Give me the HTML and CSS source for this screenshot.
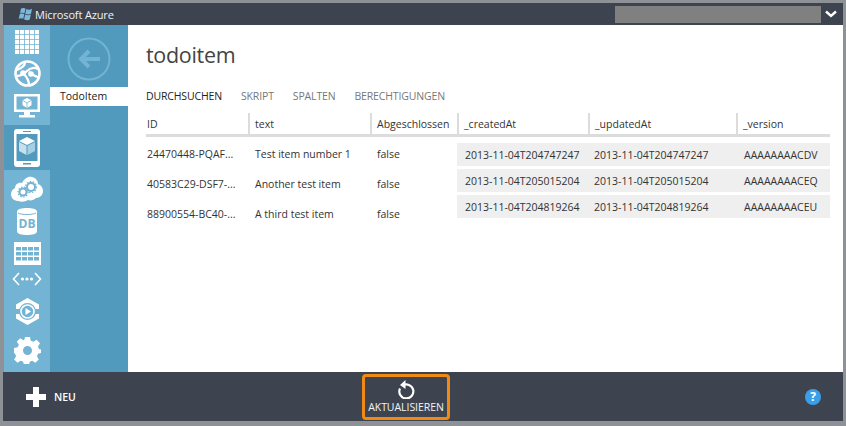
FILE: index.html
```html
<!DOCTYPE html>
<html lang="de">
<head>
<meta charset="utf-8">
<title>Microsoft Azure</title>
<link rel="stylesheet" href="styles.css">
</head>
<body>
<div class="window">
  <header class="titlebar">
    <svg class="logo" width="16" height="15" viewBox="0 0 16 15"><path fill="#7ab8dc" d="M4 1.500C6 .5 7.500 1 8.500 1.600L7.500 6.300C6 5.600 4.500 5.400 3 6.200ZM9.300 2C11 3 13 3 15 1.800L14 6.800C12 7.800 10 7.600 8.300 6.800ZM2.800 7C4.500 6.200 6 6.400 7.300 7.100L6.300 11.800C5 11 3.200 11 1.700 11.800ZM8.100 7.600C10 8.400 12 8.600 13.800 7.600L12.800 12.500C11 13.500 9 13.200 7.100 12.400Z"/></svg>
    <span class="brand">Microsoft Azure</span>
    <div class="account"></div>
    <svg class="chevron" width="12" height="8" viewBox="0 0 12 8"><path d="M1 1.500l5 4.500 5-4.500" fill="none" stroke="#fff" stroke-width="2.400"/></svg>
  </header>

  <div class="main">
    <nav class="rail">
      <div class="rail-item h34"><svg width="24" height="24" viewBox="0 0 24 24" fill="#fff"><path d="M0 0h4.200v4.200H0zM5 0h4.200v4.200H5zM10 0h4.200v4.200H10zM15 0h4.200v4.200H15zM20 0h4v4.200h-4zM0 5h4.200v4.200H0zM5 5h4.200v4.200H5zM10 5h4.200v4.200H10zM15 5h4.200v4.200H15zM20 5h4v4.200h-4zM0 10h4.200v4.200H0zM5 10h4.200v4.200H5zM10 10h4.200v4.200H10zM15 10h4.200v4.200H15zM20 10h4v4.200h-4zM0 15h4.200v4.200H0zM5 15h4.200v4.200H5zM10 15h4.200v4.200H10zM15 15h4.200v4.200H15zM20 15h4v4.200h-4zM0 20h4.200v4H0zM5 20h4.200v4H5zM10 20h4.200v4H10zM15 20h4.200v4H15zM20 20h4v4h-4z"/></svg></div>
      <div class="rail-item h28"><svg width="27" height="27" viewBox="0 0 27 27"><circle cx="13.500" cy="13.500" r="12" fill="none" stroke="#fff" stroke-width="2.600"/><path d="M3 10C8 8 11 5 11 2M24 9c-4-2-8-1-11 2-3 3-6 5-10 5M9 13c3 3 6 7 6 12M15 12c3 2 6 5 10 5" fill="none" stroke="#fff" stroke-width="2.400"/><circle cx="9" cy="13" r="2.800" fill="#fff"/><circle cx="17" cy="14" r="2.800" fill="#fff"/></svg></div>
      <div class="rail-item h38"><svg width="26" height="24" viewBox="0 0 26 24"><path fill="#fff" fill-rule="evenodd" d="M0 0h26v18H0zM2.500 2.500v13h21v-13z"/><path fill="#fff" d="M10 18h6v3h-6zM5 21h16v2.500H5zM13 4l4.500 2.300v5L13 14l-4.500-2.700v-5z"/><path stroke="#73b3d3" stroke-width=".8" fill="none" d="M8.500 6.300L13 9l4.500-2.700M13 9v5"/></svg></div>
      <div class="rail-item h45 selected"><svg width="26" height="38" viewBox="0 0 26 38"><path fill="#fff" fill-rule="evenodd" d="M3 0h20a3 3 0 0 1 3 3v32a3 3 0 0 1-3 3H3a3 3 0 0 1-3-3V3a3 3 0 0 1 3-3zM2.500 5v27h21V5z"/><path fill="#519abd" d="M9 2h8v1H9zM9 34h8v1.500H9z"/><path fill="#fff" d="M13 8l8 4-8 4-8-4z"/><path fill="#c6e0ee" d="M5 13l7.500 3.700V26L5 22z"/><path fill="#a5cfe4" d="M21 13l-7.500 3.700V26l7.500-4z"/></svg></div>
      <div class="rail-item h38"><svg width="32" height="26" viewBox="0 0 32 26"><path fill="#fff" d="M7 25C2 25 0 21 0 18c0-3 2-5 4-6 0-3 3-6 7-5 2-4 6-7 10-6 4 1 6 4 6 7 3 1 5 4 5 7 0 4-3 7-7 7-2 2-5 3-8 2-3 2-7 2-10 1z"/><circle cx="12" cy="16" r="3.500" fill="none" stroke="#73b3d3" stroke-width="2"/><circle cx="20" cy="11" r="4" fill="none" stroke="#73b3d3" stroke-width="2"/><circle cx="12" cy="16" r="5" fill="none" stroke="#73b3d3" stroke-width="1.200" stroke-dasharray="1.500 1.500"/><circle cx="20" cy="11" r="5.500" fill="none" stroke="#73b3d3" stroke-width="1.200" stroke-dasharray="1.500 1.500"/></svg></div>
      <div class="rail-item h26"><svg width="20" height="27" viewBox="0 0 20 27"><path fill="#fff" d="M0 3.500C0 1 5 0 10 0s10 1 10 3.500v20C20 26 15 27 10 27S0 26 0 23.500z"/><path d="M1 5c3 2 15 2 18 0" fill="none" stroke="#73b3d3" stroke-width="1"/><text x="10" y="20" text-anchor="middle" class="db-text">DB</text></svg></div>
      <div class="rail-item h38"><svg width="27" height="23" viewBox="0 0 27 23"><path fill="#fff" d="M0 0h27v23H0z"/><path fill="#73b3d3" d="M2 5h5v3.500H2zM8 5h5v3.500H8zM14 5h5v3.500h-5zM20 5h5v3.500h-5zM2 10h5v3.500H2zM8 10h5v3.500H8zM14 10h5v3.500h-5zM20 10h5v3.500h-5zM2 15h5v3.500H2zM8 15h5v3.500H8zM14 15h5v3.500h-5zM20 15h5v3.500h-5z"/></svg></div>
      <div class="rail-item h14"><svg width="30" height="14" viewBox="0 0 30 14"><path d="M7 1L1.500 7 7 13M23 1l5.500 6L23 13" fill="none" stroke="#fff" stroke-width="1.600"/><circle cx="10.500" cy="7" r="1.600" fill="#fff"/><circle cx="15" cy="7" r="1.600" fill="#fff"/><circle cx="19.500" cy="7" r="1.600" fill="#fff"/></svg></div>
      <div class="rail-item h50"><svg width="23" height="27" viewBox="0 0 23 27"><path fill="#fff" fill-rule="evenodd" d="M11.500 0L23 6.500v14L11.500 27 0 20.500v-14zM11.500 5a8.500 8.500 0 1 0 0 17 8.500 8.500 0 0 0 0-17z"/><path d="M0 11h4v5H0zM19 11h4v5h-4z" fill="#73b3d3"/><path d="M11.500 7a6.500 6.500 0 1 1 0 13 6.500 6.500 0 0 1 0-13z" fill="none" stroke="#fff" stroke-width="1.600"/><path d="M9.500 10v7l5.500-3.500z" fill="#fff"/></svg></div>
      <div class="rail-item h28"><svg width="27" height="27" viewBox="0 0 27 27"><path fill="#fff" fill-rule="evenodd" d="M11 0h5l.8 3.700 2.600 1.100L22.600 2.700 26 6.200 24 9.400l1 2.600 2 .4v3.500l-3 .8-1 2.600 1.800 3.100-3.400 3.400-3.200-2-2.500 1-.7 3.700h-5l-.8-3.700-2.500-1-3.200 2-3.400-3.400 2-3.200-1.100-2.500L0 15.900v-4.800l3.700-.8 1.100-2.600-2-3.100L6.200 1.200l3.200 2 .9-.4zM13.500 9a4.500 4.500 0 1 0 0 9 4.500 4.500 0 0 0 0-9z"/></svg></div>
    </nav>

    <aside class="panel">
      <div class="back">
        <svg width="44" height="44" viewBox="0 0 44 44"><circle cx="22" cy="22" r="20.500" fill="none" stroke="#73b3d3" stroke-width="2"/><path d="M33 22H14M22 14l-8 8 8 8" fill="none" stroke="#73b3d3" stroke-width="4"/></svg>
      </div>
      <div class="panel-tab">TodoItem</div>
    </aside>

    <section class="content">
      <h1 class="page-title">todoitem</h1>
      <div class="tabs">
        <span class="tab active">DURCHSUCHEN</span>
        <span class="tab">SKRIPT</span>
        <span class="tab">SPALTEN</span>
        <span class="tab">BERECHTIGUNGEN</span>
      </div>
      <div class="tables">
        <div class="table-left">
          <div class="head-row cols-left">
            <div class="th first">ID</div>
            <div class="th">text</div>
            <div class="th">Abgeschlossen</div>
          </div>
          <div class="row-left cols-left"><div class="td first">24470448-PQAF...</div><div class="td">Test item number 1</div><div class="td">false</div></div>
          <div class="row-left cols-left"><div class="td first">40583C29-DSF7-...</div><div class="td">Another test item</div><div class="td">false</div></div>
          <div class="row-left cols-left"><div class="td first">88900554-BC40-...</div><div class="td">A third test item</div><div class="td">false</div></div>
        </div>
        <div class="table-right">
          <div class="head-row cols-right">
            <div class="th">_createdAt</div>
            <div class="th">_updatedAt</div>
            <div class="th">_version</div>
          </div>
          <div class="row-right cols-right"><div class="td">2013-11-04T204747247</div><div class="td">2013-11-04T204747247</div><div class="td">AAAAAAAACDV</div></div>
          <div class="row-right cols-right"><div class="td">2013-11-04T205015204</div><div class="td">2013-11-04T205015204</div><div class="td">AAAAAAAACEQ</div></div>
          <div class="row-right cols-right"><div class="td">2013-11-04T204819264</div><div class="td">2013-11-04T204819264</div><div class="td">AAAAAAAACEU</div></div>
        </div>
      </div>
    </section>
  </div>

  <footer class="footer">
    <div class="new">
      <svg width="20" height="20" viewBox="0 0 20 20"><path fill="#fff" d="M7 0h6v7h7v6h-7v7H7v-7H0V7h7z"/></svg>
      <span>NEU</span>
    </div>
    <div class="refresh">
      <svg width="18" height="19" viewBox="0 0 18 19"><path d="M5.500 4.600A7 7 0 1 1 3 7.500" fill="none" stroke="#fff" stroke-width="2.200" transform="translate(0 1)"/><path d="M9 0v9L3.500 5z" fill="#fff" transform="translate(-.5 0)"/></svg>
      <span>AKTUALISIEREN</span>
    </div>
    <div class="help">?</div>
  </footer>
</div>
</body>
</html>
```
FILE: styles.css
```css
* { box-sizing: border-box; }
html, body { margin: 0; padding: 0; }
body {
  width: 846px;
  height: 426px;
  overflow: hidden;
  background: #fff;
  font-family: "Open Sans", "Noto Sans", sans-serif;
  color: #333;
}
.window {
  width: 846px;
  height: 426px;
  display: flex;
  flex-direction: column;
  border-style: solid;
  border-color: #8e9297;
  border-width: 3px 3px 5px 3px;
  background: #fff;
}
.titlebar {
  height: 22px;
  flex: none;
  background: #3d4450;
  display: flex;
  align-items: center;
  color: #fff;
}
.logo { margin-left: 14px; }
.brand {
  margin-left: 2px;
  font-size: 11px;
  color: #f0f2f4;
  letter-spacing: -.15px;
}
.account {
  margin-left: auto;
  width: 206px;
  height: 17px;
  background: #808080;
}
.chevron { margin: 0 6px 0 4px; }

.main { flex: 1; display: flex; min-height: 0; }
.rail {
  width: 47px;
  flex: none;
  background: #73b3d3;
  border-left: 1px solid #8e9297;
  display: flex;
  flex-direction: column;
}
.rail-item {
  display: flex;
  align-items: center;
  justify-content: center;
  flex: none;
}
.h14 { height: 14px; }
.h26 { height: 26px; }
.h28 { height: 28px; }
.h34 { height: 34px; }
.h38 { height: 38px; }
.h45 { height: 45px; }
.h50 { height: 50px; }
.rail-item.selected { background: #519abd; }
.db-text { font-size: 12px; font-weight: 700; fill: #73b3d3; font-family: "Open Sans", sans-serif; }

.panel {
  width: 78px;
  flex: none;
  background: #519abd;
}
.back {
  height: 62px;
  display: flex;
  align-items: center;
  justify-content: center;
  padding-top: 6px;
}
.panel-tab {
  height: 19px;
  background: #fff;
  font-size: 10.500px;
  line-height: 19px;
  padding-left: 10px;
  color: #222;
}

.content { flex: 1; padding: 14px 12px 0 18px; min-width: 0; }
.page-title {
  margin: 0;
  font-size: 21.500px;
  font-weight: 400;
  line-height: 32px;
  color: #444;
  letter-spacing: -.3px;
}
.tabs {
  display: flex;
  gap: 19px;
  margin-top: 18px;
  height: 14px;
  align-items: center;
}
.tab { font-size: 10.500px; color: #777; letter-spacing: -.15px; }
.tab.active { color: #222; }

.tables { display: flex; margin-top: 10px; }
.table-left { width: 311px; flex: none; }
.table-right { width: 373px; flex: none; }
.head-row {
  height: 24px;
  border-bottom: 3px solid #dcdcdc;
  align-items: stretch;
}
.cols-left { display: grid; grid-template-columns: 102px 122px 87px; }
.cols-right { display: grid; grid-template-columns: 131px 148px 94px; }
.th {
  font-size: 10.500px;
  line-height: 22px;
  padding-left: 5px;
  border-left: 2px solid #dcdcdc;
  color: #333;
}
.th.first { border-left: 0; padding-left: 1px; }
.td {
  font-size: 10.500px;
  padding-left: 7px;
  color: #333;
  white-space: nowrap;
}
.td.first { padding-left: 1px; }
.row-left { height: 30px; align-items: center; }
.table-left .head-row + .row-left { margin-top: 2px; }
.row-right {
  height: 23px;
  margin-bottom: 3px;
  align-items: center;
  background: #efefef;
}
.row-right .td:first-child { padding-left: 8px; }
.row-right .td:nth-child(2) { padding-left: 6px; }
.row-right .td:last-child { padding-left: 8px; }
.table-right .head-row { margin-bottom: 6px; }

.footer {
  flex: none;
  height: 49px;
  background: #3d4450;
  display: grid;
  grid-template-columns: 359px 88px 1fr;
  align-items: center;
  color: #fff;
}
.new {
  display: flex;
  align-items: center;
  gap: 8px;
  padding-left: 23px;
  font-size: 10.500px;
  font-weight: 600;
}
.refresh {
  height: 46px;
  margin-top: 1px;
  border: 3px solid #f08a12;
  border-radius: 4px;
  display: flex;
  flex-direction: column;
  align-items: center;
  justify-content: center;
  gap: 1px;
  font-size: 10.500px;
  letter-spacing: -.05px;
  white-space: nowrap;
  color: #f4f4f4;
}
.help {
  justify-self: end;
  margin-right: 22px;
  width: 16px;
  height: 16px;
  border-radius: 50%;
  background: #3a9fe8;
  color: #fff;
  font-size: 12px;
  font-weight: 700;
  line-height: 16px;
  text-align: center;
}
```
